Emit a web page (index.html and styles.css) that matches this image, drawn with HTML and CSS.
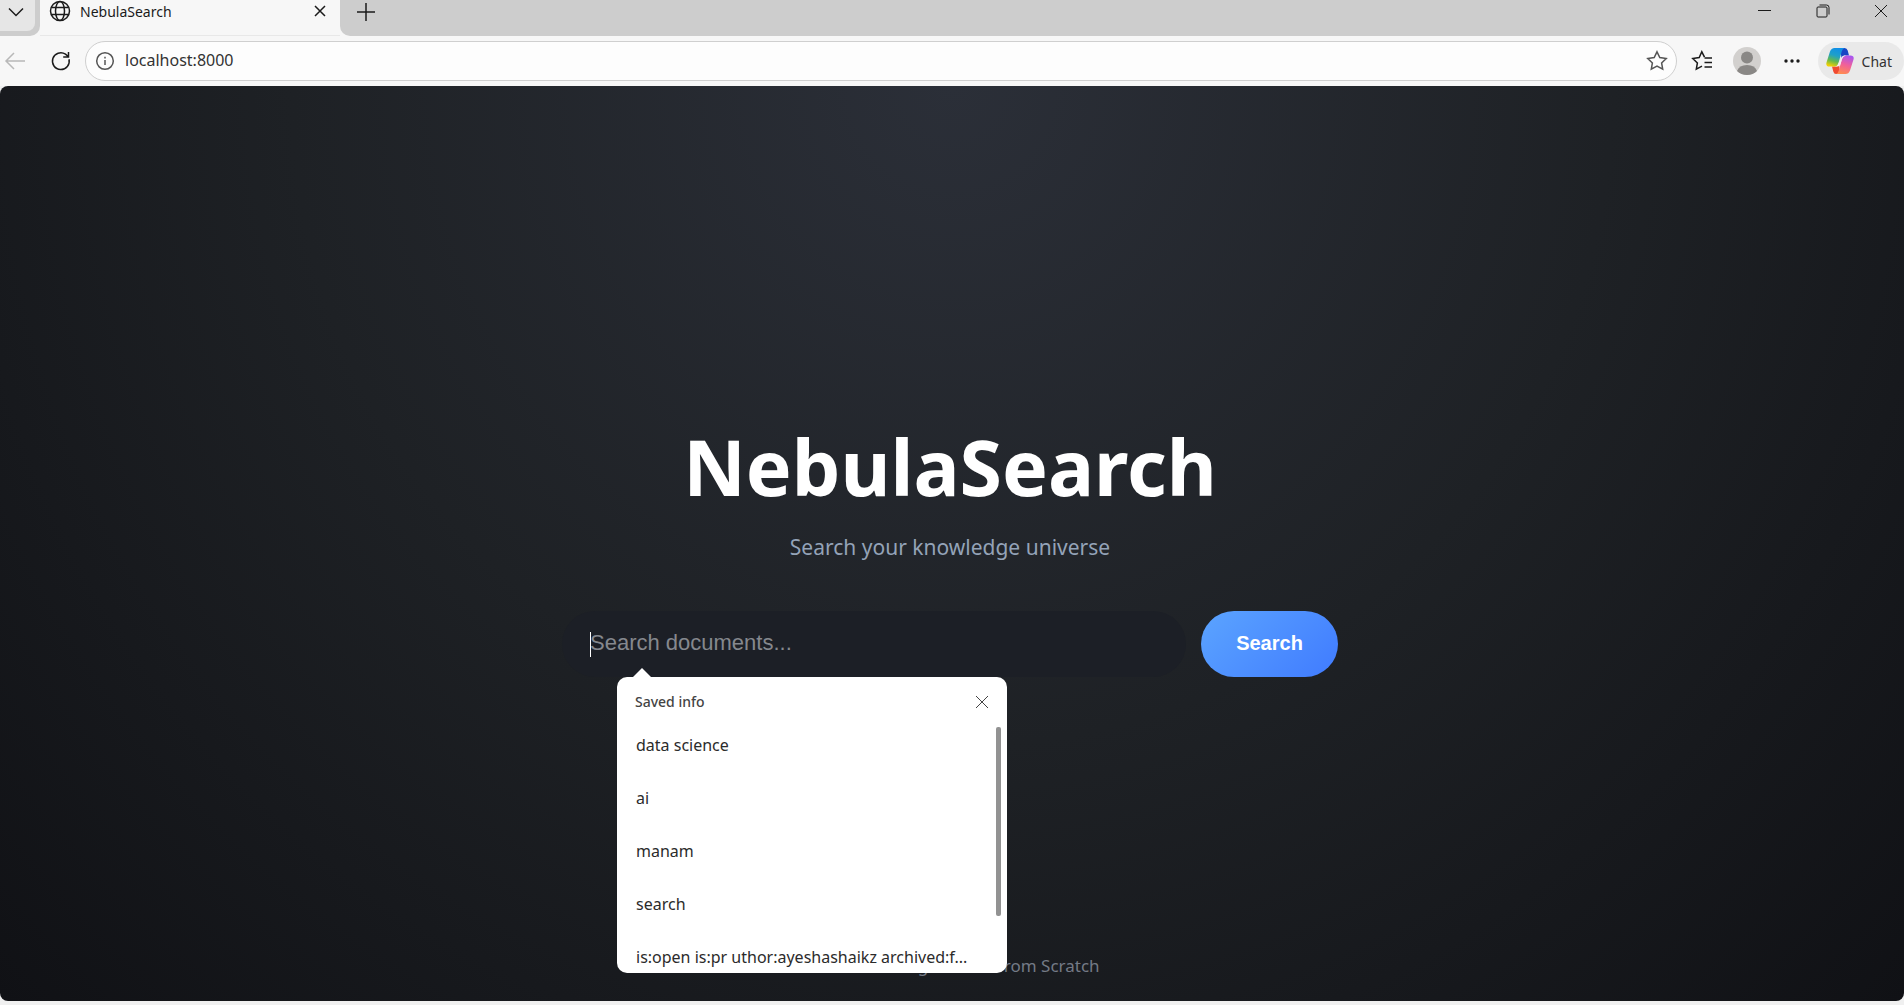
FILE: index.html
```html
<!DOCTYPE html>
<html lang="en">
  <head>
    <meta charset="UTF-8" />
    <meta name="viewport" content="width=device-width, initial-scale=1.0" />
    <title>NebulaSearch</title>
    <link rel="stylesheet" href="styles.css" />
  </head>
  <body>
    <header class="browser">
      <div class="tab-strip">
        <div class="tab-actions">
          <button class="tab-menu" aria-label="Tab actions">
            <svg width="16" height="10" viewBox="0 0 16 10"><path d="M1 1.5 8 8.5 15 1.5" /></svg>
          </button>
        </div>
        <div class="tab">
          <svg class="globe" width="22" height="22" viewBox="0 0 22 22">
            <circle cx="11" cy="11" r="9.5" />
            <ellipse cx="11" cy="11" rx="4.5" ry="9.5" />
            <path d="M2.2 7.5h17.6M2.2 14.5h17.6" />
          </svg>
          <span class="tab-title">NebulaSearch</span>
          <button class="tab-close" aria-label="Close tab">
            <svg width="12" height="12" viewBox="0 0 12 12"><path d="M1 1l10 10M11 1 1 11" /></svg>
          </button>
        </div>
        <div class="strip-rest">
          <button class="new-tab" aria-label="New tab">
            <svg width="20" height="20" viewBox="0 0 20 20"><path d="M10 1v18M1 10h18" /></svg>
          </button>
          <div class="window-buttons">
            <button aria-label="Minimize">
              <svg width="14" height="14" viewBox="0 0 14 14"><path d="M0 6.5h13" /></svg>
            </button>
            <button aria-label="Restore">
              <svg width="14" height="14" viewBox="0 0 14 14">
                <rect x="1" y="3" width="10" height="10" rx="1" />
                <path d="M3.5 1h7Q13 1 13 3.5v7" />
              </svg>
            </button>
            <button aria-label="Close">
              <svg width="14" height="14" viewBox="0 0 14 14"><path d="M1 1l12 12M13 1 1 13" /></svg>
            </button>
          </div>
        </div>
      </div>
      <div class="toolbar">
        <button class="back" aria-label="Back">
          <svg width="22" height="20" viewBox="0 0 22 20"><path d="M21 10H2M10 2 2 10l8 8" /></svg>
        </button>
        <button class="reload" aria-label="Refresh">
          <svg width="22" height="22" viewBox="0 0 22 22">
            <path d="M19 9.2A8.4 8.4 0 1 1 15.5 4.2L18.5 6.8M18.5 2v5h-5.3" />
          </svg>
        </button>
        <div class="address-bar">
          <svg width="20" height="20" viewBox="0 0 20 20">
            <circle cx="10" cy="10" r="8.3" />
            <path d="M10 9v5M10 5.8v1.7" />
          </svg>
          <input type="text" class="address" value="localhost:8000" aria-label="Address" />
          <button class="favorite" aria-label="Add to favorites">
            <svg width="22" height="22" viewBox="0 0 22 22">
              <path d="M11 1.8l2.8 5.8 6.4.9-4.6 4.4 1.1 6.3L11 16.2l-5.7 3 1.1-6.3L1.8 8.5l6.4-.9z" />
            </svg>
          </button>
        </div>
        <button class="favorites" aria-label="Favorites">
          <svg width="22" height="22" viewBox="0 0 22 22">
            <path d="M13.5 8H21M13.5 12.5H21M13.5 17H21" />
            <path d="M13.5 7.2 10.8 1.8 8.2 7.6l-6.4.9 4.6 4.4-1.1 6.3 5.7-3" />
          </svg>
        </button>
        <button class="profile" aria-label="Profile">
          <svg width="28" height="28" viewBox="0 0 28 28">
            <circle cx="14" cy="14" r="14" fill="#d2d0ce" />
            <circle cx="14" cy="10.5" r="6" fill="#8a8886" />
            <path d="M4 24Q6 18 14 18t10 6Q20 28 14 28T4 24z" fill="#8a8886" />
          </svg>
        </button>
        <button class="more" aria-label="Settings and more">
          <svg width="18" height="6" viewBox="0 0 18 6">
            <circle cx="3" cy="3" r="1.7" />
            <circle cx="9" cy="3" r="1.7" />
            <circle cx="15" cy="3" r="1.7" />
          </svg>
        </button>
        <button class="chat">
          <svg width="28" height="28" viewBox="0 0 28 28">
            <defs>
              <linearGradient id="cool" x1="0.6" y1="0" x2="0.3" y2="1">
                <stop offset="0" stop-color="#0f8fe8" />
                <stop offset="0.4" stop-color="#1fa0c8" />
                <stop offset="0.7" stop-color="#62b850" />
                <stop offset="1" stop-color="#f5d000" />
              </linearGradient>
              <linearGradient id="warm" x1="0.7" y1="0" x2="0.4" y2="1">
                <stop offset="0" stop-color="#a855f0" />
                <stop offset="0.5" stop-color="#f0609a" />
                <stop offset="1" stop-color="#ff8a52" />
              </linearGradient>
            </defs>
            <path d="M14 1h4.5q2.5 0 3.2 2.5l1.3 5h-4.5q-2 0-3 2.5z" fill="#1746c4" />
            <path d="M14 27H10q-2 0-2.7-2.5L6 19.5h4q2 0 3-3z" fill="#f04a30" />
            <path d="M8.500 1H18.500q-2 .5-2.800 3.500L12.500 16q-1 3.500-4 3.500H3.500q-4 0-3-4L4 4.500Q5.300 1 8.500 1z" fill="url(#cool)" />
            <path d="M19.5 27H10q2-.5 2.800-3.500L16 12q1-3.500 4-3.500h4.500q4 0 3 4L24 23.500Q22.700 27 19.500 27z" fill="url(#warm)" />
            <path d="M15.500 10.500Q16.500 8.500 18.500 8.500H20q-3 .5-4 3.500l-1.500 5q-1 2.500-3 2.500H8.500q3 0 4-3.500z" fill="#f4eef0" />
          </svg>
          <span>Chat</span>
        </button>
      </div>
    </header>

    <main class="page">
      <div class="hero">
        <h1 class="logo">NebulaSearch</h1>
        <p class="tagline">Search your knowledge universe</p>
        <form class="search-form">
          <div class="search-field">
            <input type="text" class="search-input" placeholder="Search documents..." aria-label="Search documents" />
            <div class="autofill">
              <div class="autofill-header">
                <span>Saved info</span>
                <button type="button" aria-label="Close saved info">
                  <svg width="14" height="14" viewBox="0 0 14 14"><path d="M1 1l12 12M13 1 1 13" /></svg>
                </button>
              </div>
              <div class="autofill-body">
                <ul class="autofill-list">
                  <li>data science</li>
                  <li>ai</li>
                  <li>manam</li>
                  <li>search</li>
                  <li>is:open is:pr uthor:ayeshashaikz archived:f...</li>
                </ul>
                <div class="autofill-scroll"></div>
              </div>
            </div>
          </div>
          <button type="submit" class="search-btn">Search</button>
        </form>
      </div>
      <footer class="footer">Mini Search Engine Built from Scratch</footer>
    </main>
  </body>
</html>
```
FILE: styles.css
```css
* {
  box-sizing: border-box;
}
body {
  margin: 0;
  height: 100vh;
  display: flex;
  flex-direction: column;
  background-color: #f0f0f0;
  font-family: "Noto Sans", "Open Sans", sans-serif;
  overflow: hidden;
}
button {
  border: none;
  padding: 0;
  background: none;
  font-family: inherit;
  color: inherit;
  display: flex;
  align-items: center;
  justify-content: center;
  cursor: pointer;
}
svg {
  flex-shrink: 0;
  fill: none;
  stroke: #1b1b1b;
  stroke-width: 1.5;
}

/* browser window */
.browser {
  background-color: #f7f7f7;
}
.tab-strip {
  display: flex;
  height: 36px;
}
.tab-actions {
  width: 40px;
  background-color: #cdcdcd;
  border-bottom-right-radius: 10px;
}
.tab-menu {
  width: 35px;
  height: 31px;
  padding: 0 4px 7px 0;
  background-color: #e6e6e6;
  border-bottom-right-radius: 8px;
}
.tab {
  width: 300px;
  display: flex;
  align-items: center;
  padding: 0 14px 13px 9px;
  border-bottom: 1px solid #e8e8e8;
}
.tab-title {
  flex: 1;
  margin-left: 9px;
  font-size: 14px;
  color: #1b1b1b;
}
.strip-rest {
  flex: 1;
  display: flex;
  justify-content: space-between;
  align-items: flex-start;
  background-color: #cdcdcd;
  border-bottom-left-radius: 10px;
}
.new-tab {
  width: 52px;
  height: 24px;
}
.window-buttons {
  display: flex;
}
.window-buttons button {
  width: 58px;
  height: 21px;
}
.window-buttons button:last-child {
  width: 46px;
  margin-left: 6px;
}
.window-buttons svg {
  stroke-width: 1;
}
.toolbar {
  display: flex;
  align-items: center;
  height: 50px;
  padding-left: 4px;
}
.back svg {
  stroke: #b8b8b8;
}
.reload {
  margin: 0 13px 0 24px;
}
.address-bar {
  flex: 1;
  display: flex;
  align-items: center;
  height: 40px;
  padding: 0 8px 0 9px;
  border: 1px solid #cfcfcf;
  border-radius: 20px;
  background-color: #fdfdfd;
}
.address-bar svg {
  stroke: #555555;
}
.address {
  flex: 1;
  min-width: 0;
  padding: 0 10px 2px;
  border: none;
  outline: none;
  background: none;
  font-family: inherit;
  font-size: 16px;
  color: #333333;
}
.favorites {
  margin-left: 14px;
}
.profile {
  margin: 0 22px 0 20px;
}
.profile svg {
  stroke: none;
}
.more svg {
  fill: #1b1b1b;
  stroke: none;
}
.chat {
  height: 38px;
  margin-left: 17px;
  padding: 0 12px 0 8px;
  gap: 8px;
  border-radius: 19px;
  background-color: #e9e9e9;
  font-size: 14px;
  color: #333333;
}
.chat svg {
  stroke: none;
}

/* search page */
.page {
  flex: 1;
  display: flex;
  flex-direction: column;
  align-items: center;
  margin-bottom: 4px;
  padding: 0 4px 23px 0;
  border-radius: 8px;
  background: radial-gradient(circle at top, #2b2f38 0%, #1e2125 50%, #101115 100%);
}
.hero {
  flex: 1;
  display: flex;
  flex-direction: column;
  align-items: center;
  justify-content: center;
  padding-top: 53px;
}
.logo {
  margin: 0;
  font-size: 77px;
  line-height: 100px;
  color: white;
}
.tagline {
  margin: 14px 0 48px;
  font-size: 21px;
  line-height: 32px;
  color: #94a3b8;
}
.search-form {
  display: flex;
  gap: 15px;
}
.search-field {
  position: relative;
}
/* text caret */
.search-field::before {
  content: "";
  position: absolute;
  top: 21px;
  left: 28px;
  width: 1px;
  height: 25px;
  background-color: white;
}
.search-input {
  width: 624px;
  max-width: 70vw;
  height: 66px;
  padding: 0 28px 2px;
  border: none;
  outline: none;
  border-radius: 33px;
  background-color: #1c1f26;
  font-family: "Liberation Sans", Arial, sans-serif;
  font-size: 22px;
  color: white;
}
.search-input::placeholder {
  color: #85888e;
}
.search-btn {
  width: 137px;
  height: 66px;
  border-radius: 33px;
  background: linear-gradient(135deg, #5ba4ff, #407bff);
  font-family: "Liberation Sans", Arial, sans-serif;
  font-size: 20px;
  font-weight: bold;
  color: white;
}
.footer {
  font-size: 17px;
  line-height: 24px;
  color: #747a86;
}

/* saved entries under the search box */
.autofill {
  position: absolute;
  top: 66px;
  left: 55px;
  width: 390px;
  border-radius: 10px;
  background-color: white;
  color: #2b2b2b;
}
.autofill::before {
  content: "";
  position: absolute;
  left: 16px;
  bottom: 100%;
  border: 9px solid transparent;
  border-top-width: 0;
  border-bottom-color: white;
}
.autofill-header {
  display: flex;
  align-items: center;
  justify-content: space-between;
  height: 50px;
  padding: 0 18px;
  font-size: 14px;
  font-weight: 500;
  color: #444444;
}
.autofill-header svg {
  stroke: #444444;
  stroke-width: 1;
}
.autofill-body {
  display: flex;
  height: 246px;
  padding-right: 6px;
}
.autofill-list {
  flex: 1;
  min-width: 0;
  height: 246px;
  margin: 0;
  padding: 0 0 0 19px;
  overflow: hidden;
  list-style: none;
  font-size: 16px;
}
.autofill-list li {
  height: 53px;
  line-height: 36px;
  white-space: nowrap;
}
.autofill-scroll {
  width: 5px;
  height: 189px;
  border-radius: 2px;
  background-color: #929292;
}
```
